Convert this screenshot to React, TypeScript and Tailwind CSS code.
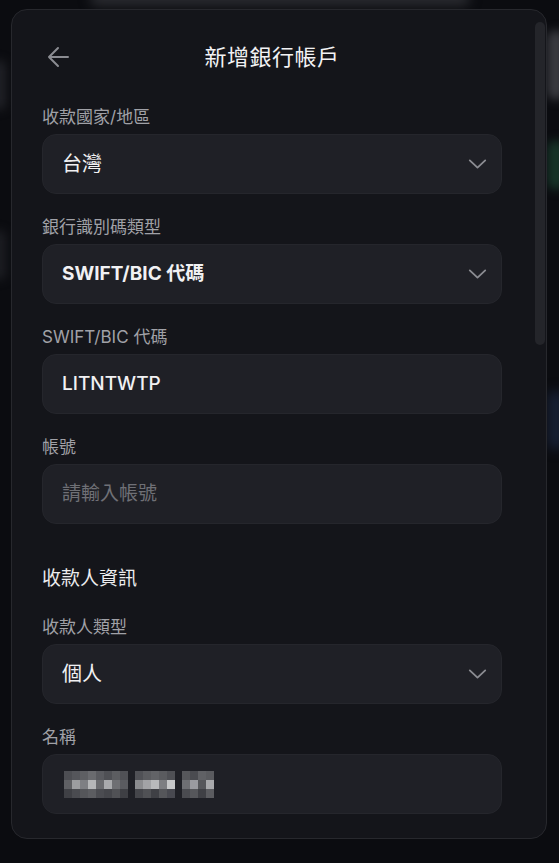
import React from "react";

const mosaic: string[][][] = [
  [
    ["bg-[#4d4e53]", "bg-[#55565b]", "bg-[#5e5f63]", "bg-[#6a6b6f]", "bg-[#5a5b60]", "bg-[#4f5055]", "bg-[#5c5d61]", "bg-[#505156]"],
    ["bg-[#5f6064]", "bg-[#9c9da0]", "bg-[#7e7f83]", "bg-[#b5b6b8]", "bg-[#6a6b6f]", "bg-[#a9aaad]", "bg-[#6e6f73]", "bg-[#5a5b60]"],
    ["bg-[#3f4045]", "bg-[#4a4b50]", "bg-[#55565a]", "bg-[#5c5d61]", "bg-[#4b4c51]", "bg-[#45464b]", "bg-[#505155]", "bg-[#3e3f44]"],
  ],
  [
    ["bg-[#505156]", "bg-[#5b5c60]", "bg-[#626367]", "bg-[#5a5b5f]", "bg-[#4f5055]"],
    ["bg-[#8b8c8f]", "bg-[#a2a3a6]", "bg-[#b8b9bb]", "bg-[#7d7e82]", "bg-[#c6c7c9]"],
    ["bg-[#45464b]", "bg-[#505155]", "bg-[#3f4045]", "bg-[#55565a]", "bg-[#484950]"],
  ],
  [
    ["bg-[#56575b]", "bg-[#4a4b50]", "bg-[#606165]", "bg-[#5a5b5f]"],
    ["bg-[#6e6f73]", "bg-[#9a9ba0]", "bg-[#56575b]", "bg-[#a8a9ac]"],
    ["bg-[#4a4b50]", "bg-[#56575b]", "bg-[#3f4045]", "bg-[#5b5c60]"],
  ],
];

function Chevron() {
  return (
    <svg width="19" height="10" viewBox="0 0 20 11" fill="none" className="shrink-0">
      <path d="M1.5 1.5l8.5 8 8.5-8" stroke="#8b8c92" strokeWidth="2" strokeLinecap="round" strokeLinejoin="round" />
    </svg>
  );
}

function Label({ children }: { children: React.ReactNode }) {
  return <div className="text-[17px] leading-[24px] text-[#a0a1a7] mb-[5px]">{children}</div>;
}

function Box({ children, select }: { children: React.ReactNode; select?: boolean }) {
  return (
    <div className="h-[60px] rounded-[14px] bg-[#1f2026] border border-[#25262c] flex items-center justify-between pl-[19px] pr-[14px]">
      <div className="flex items-center">{children}</div>
      {select && <Chevron />}
    </div>
  );
}

function Field({ label, children, select }: { label: string; children: React.ReactNode; select?: boolean }) {
  return (
    <div>
      <Label>{label}</Label>
      <Box select={select}>{children}</Box>
    </div>
  );
}

export default function App() {
  return (
    <div className="relative w-[559px] h-[863px] overflow-hidden bg-[#0b0c10] font-['Inter','Noto_Sans_CJK_TC',sans-serif]">
      {/* blurred page behind the dialog */}
      <div className="absolute left-[90px] top-[-10px] w-[380px] h-[16px] rounded-full bg-[#2a2b30] blur-[6px]" />
      <div className="absolute right-[-6px] top-[30px] w-[18px] h-[70px] rounded-full bg-[#3a3b40] blur-[5px]" />
      <div className="absolute right-[-6px] top-[140px] w-[18px] h-[50px] rounded-full bg-[#173428] blur-[5px]" />
      <div className="absolute right-[-6px] top-[390px] w-[18px] h-[60px] rounded-full bg-[#172033] blur-[6px]" />
      <div className="absolute left-[-8px] top-[60px] w-[14px] h-[50px] rounded-full bg-[#202126] blur-[5px]" />
      <div className="absolute left-[-8px] top-[230px] w-[14px] h-[50px] rounded-full bg-[#1c1d22] blur-[5px]" />

      <div className="relative ml-[11px] mt-[9px] w-[536px] h-[830px] rounded-[16px] border border-[#27282d] bg-[#14151a] overflow-hidden flex">
        <div className="flex-1 pl-[30px] pr-[33px] pt-[15px]">
          <div className="h-[64px] grid grid-cols-[1fr_auto_1fr] items-center">
            <div className="ml-[5px]">
              <svg width="22" height="22" viewBox="0 0 22 22" fill="none">
                <path d="M21 11H2M11 2L2 11l9 9" stroke="#8b8c92" strokeWidth="2" strokeLinecap="round" strokeLinejoin="round" />
              </svg>
            </div>
            <div className="text-[22px] leading-[30px] text-[#f2f2f4] tracking-[0.5px]">新增銀行帳戶</div>
            <div />
          </div>

          <div className="mt-[16px] flex flex-col gap-[21px]">
            <Field label="收款國家/地區" select>
              <span className="text-[20px] text-[#f1f1f3]">台灣</span>
            </Field>
            <Field label="銀行識別碼類型" select>
              <span className="text-[19px] font-bold text-[#f1f1f3]">SWIFT/BIC 代碼</span>
            </Field>
            <Field label="SWIFT/BIC 代碼">
              <span className="text-[19px] font-medium text-[#f1f1f3]">LITNTWTP</span>
            </Field>
            <Field label="帳號">
              <span className="text-[19px] text-[#6f7076]">請輸入帳號</span>
            </Field>
          </div>

          <div className="mt-[41px] mb-[22px] text-[19px] leading-[28px] text-[#ececee]">收款人資訊</div>

          <div className="flex flex-col gap-[21px]">
            <Field label="收款人類型" select>
              <span className="text-[20px] text-[#f1f1f3]">個人</span>
            </Field>
            <Field label="名稱">
              <div className="flex gap-[7px] ml-[2px] blur-[0.4px]">
                {mosaic.map((group, gi) => (
                  <div key={gi} className="flex flex-col">
                    {group.map((row, ri) => (
                      <div key={ri} className="flex">
                        {row.map((c, ci) => (
                          <div key={ci} className={`w-[8px] h-[9px] ${c}`} />
                        ))}
                      </div>
                    ))}
                  </div>
                ))}
              </div>
            </Field>
            <Label>地址</Label>
          </div>
        </div>

        <div className="w-[11px] shrink-0 pt-[12px] pr-[1px]">
          <div className="w-[10px] h-[323px] rounded-[5px] bg-[#24252a]" />
        </div>
      </div>
    </div>
  );
}
